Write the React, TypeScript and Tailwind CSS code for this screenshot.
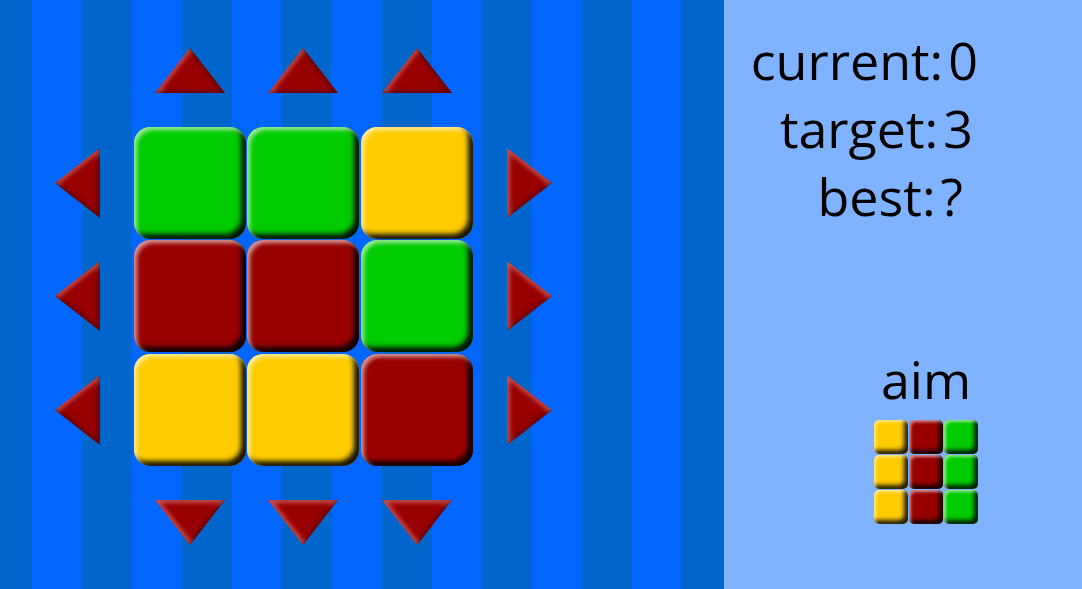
type Dir = "up" | "down" | "left" | "right";

const RED = "bg-[#990000]";
const GREEN = "bg-[#00cc00]";
const YELLOW = "bg-[#ffcc00]";

const board = [
  [GREEN, GREEN, YELLOW],
  [RED, RED, GREEN],
  [YELLOW, YELLOW, RED],
];

const aim = [
  [YELLOW, RED, GREEN],
  [YELLOW, RED, GREEN],
  [YELLOW, RED, GREEN],
];

// triangle shapes: [width, height, polygon, lit edge, shaded edge]
const shapes: Record<Dir, [number, number, string, string, string]> = {
  up: [70, 45, "0,45 35,0 70,45", "0,45 35,0", "35,0 70,45 0,45"],
  down: [70, 45, "0,0 70,0 35,45", "35,45 0,0 70,0", "70,0 35,45"],
  left: [45, 70, "45,0 0,35 45,70", "0,35 45,0", "45,0 45,70 0,35"],
  right: [45, 70, "0,0 45,35 0,70", "0,70 0,0 45,35", "45,35 0,70"],
};

function Arrow({ dir }: { dir: Dir }) {
  const [w, h, pts, lit, dark] = shapes[dir];
  const id = `clip-${dir}`;
  return (
    <svg width={w} height={h} viewBox={`0 0 ${w} ${h}`} className="block">
      <defs>
        <clipPath id={id}>
          <polygon points={pts} />
        </clipPath>
        <filter id={`blur-${dir}`} x="-20%" y="-20%" width="140%" height="140%">
          <feGaussianBlur stdDeviation="2" />
        </filter>
      </defs>
      <polygon points={pts} fill="#990000" />
      <g clipPath={`url(#${id})`} filter={`url(#blur-${dir})`}>
        <polyline points={lit} fill="none" stroke="rgba(255,190,190,0.4)" strokeWidth={6} />
        <polyline points={dark} fill="none" stroke="rgba(50,0,0,0.5)" strokeWidth={5} />
      </g>
    </svg>
  );
}

function Tile({ color }: { color: string }) {
  return (
    <div
      className={`${color} w-[112px] h-[112px] rounded-[16px] shadow-[inset_3px_3px_4px_rgba(255,255,255,0.6),inset_-5px_-5px_5px_rgba(0,0,0,0.9)]`}
    />
  );
}

function MiniTile({ color }: { color: string }) {
  return (
    <div
      className={`${color} w-[34px] h-[34px] rounded-[5px] shadow-[inset_2px_2px_3px_rgba(255,255,255,0.55),inset_-4px_-4px_4px_rgba(0,0,0,0.85)]`}
    />
  );
}

function Stat({ label, value, className = "" }: { label: string; value: string; className?: string }) {
  return (
    <div className={className}>
      {label}:<span className="ml-[5px]">{value}</span>
    </div>
  );
}

export default function App() {
  return (
    <div className="flex w-[1082px] h-[589px] overflow-hidden font-['Open_Sans',sans-serif] text-black">
      {/* Board */}
      <div className="w-[724px] h-full pl-[55px] pt-[48px] bg-[repeating-linear-gradient(90deg,#0066cc_0px,#0066cc_32px,#0066ff_32px,#0066ff_82px,#0066cc_82px,#0066cc_100px)]">
        <div className="grid grid-cols-[45px_339px_45px] grid-rows-[45px_339px_45px] gap-[34px]">
          <div />
          <div className="grid grid-cols-3 gap-px justify-items-center">
            {[0, 1, 2].map((i) => (
              <Arrow key={i} dir="up" />
            ))}
          </div>
          <div />

          <div className="grid grid-rows-3 gap-px items-center">
            {[0, 1, 2].map((i) => (
              <Arrow key={i} dir="left" />
            ))}
          </div>
          <div className="grid grid-cols-3 gap-px">
            {board.flat().map((c, i) => (
              <Tile key={i} color={c} />
            ))}
          </div>
          <div className="grid grid-rows-3 gap-px items-center">
            {[0, 1, 2].map((i) => (
              <Arrow key={i} dir="right" />
            ))}
          </div>

          <div />
          <div className="grid grid-cols-3 gap-px justify-items-center">
            {[0, 1, 2].map((i) => (
              <Arrow key={i} dir="down" />
            ))}
          </div>
          <div />
        </div>
      </div>

      {/* Score panel */}
      <div className="flex-1 h-full bg-[#80b3ff] flex flex-col items-end pr-[104px] pt-[26px] text-[52px] leading-[68px]">
        <Stat label="current" value="0" />
        <Stat label="target" value="3" className="mr-[5px]" />
        <Stat label="best" value="?" className="mr-[15px]" />
        <div className="mt-[115px] w-[104px] flex flex-col items-center">
          <div>aim</div>
          <div className="mt-[7px] grid grid-cols-3 gap-[1px]">
            {aim.flat().map((c, i) => (
              <MiniTile key={i} color={c} />
            ))}
          </div>
        </div>
      </div>
    </div>
  );
}
